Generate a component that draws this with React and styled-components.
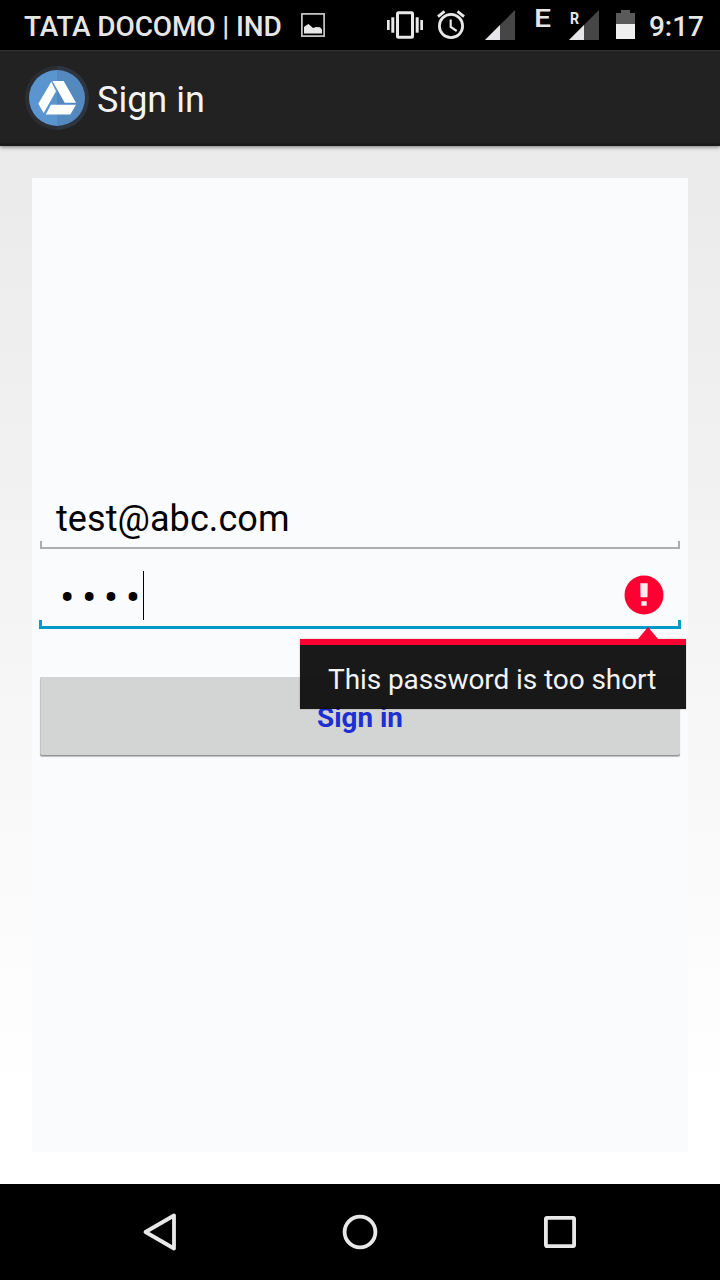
import React from "react";
import styled, { createGlobalStyle } from "styled-components";

const GlobalStyle = createGlobalStyle`
  * { box-sizing: border-box; }
  body { margin: 0; font-family: Roboto, sans-serif; background: #fff; }
  svg { display: block; flex: none; }
`;

const Screen = styled.div`
  width: 720px;
  height: 1280px;
  display: flex;
  flex-direction: column;
  overflow: hidden;
`;

const StatusBar = styled.header`
  height: 50px;
  flex: none;
  display: flex;
  align-items: center;
  justify-content: space-between;
  padding: 0 16px 0 24px;
  background: #000;
  color: #e6e6e6;
`;

const StatusGroup = styled.div`
  height: 50px;
  display: flex;
  align-items: center;
  gap: ${(p) => p.$gap || 0}px;
`;

const StatusText = styled.span`
  font-size: 28px;
  line-height: 33px;
  font-weight: 500;
  white-space: nowrap;
  padding-top: 3px;
  letter-spacing: ${(p) => p.$tracking || 0}px;
`;

const ActionBar = styled.div`
  height: 96px;
  flex: none;
  display: flex;
  align-items: center;
  gap: 8px;
  padding-left: 25px;
  background: linear-gradient(#222 91px, #1b1a1a 93px);
  border-top: 1px solid #333;
  box-shadow: 0 1px 4px rgba(0, 0, 0, 0.5);
  z-index: 1;
`;

const Title = styled.h1`
  margin: 0;
  font-size: 36px;
  line-height: 42px;
  font-weight: 400;
  color: #f3f3f3;
  padding-top: 3px;
`;

const Content = styled.main`
  flex: 1;
  padding: 32px;
  background: linear-gradient(#eaeaea, #fff 92%);
`;

const Card = styled.div`
  height: 100%;
  padding: 314px 8px 0;
  display: flex;
  flex-direction: column;
  background: #fafbfd;
`;

const Field = styled.div`
  height: 57px;
  flex: none;
  display: flex;
  flex-direction: column;
  justify-content: flex-end;
  position: relative;
`;

const PasswordField = styled(Field)`
  height: 80px;
  margin: 0 -1px;
`;

const FieldRow = styled.div`
  height: 49px;
  display: flex;
  align-items: center;
  padding: 0 17px;
`;

const EmailText = styled.span`
  display: block;
  padding: 0 0 1px 16px;
  font-size: 36px;
  line-height: 42px;
  letter-spacing: 0.08px;
  color: #000;
`;

const Bullets = styled.span`
  width: 87px;
  padding: 4px 0 0 4px;
  font-size: 43px;
  line-height: 45px;
  letter-spacing: 7.4px;
  color: #000;
  white-space: nowrap;
`;

const Caret = styled.span`
  width: 1px;
  height: 49px;
  background: #000;
`;

const ErrorSlot = styled.span`
  margin-left: auto;
  padding-bottom: 2px;
`;

const Underline = styled.div`
  height: ${(p) => (p.$active ? 9 : 8)}px;
  flex: none;
  border: ${(p) => (p.$active ? "3px solid #0099cc" : "2px solid #adaeb0")};
  border-top: 0;
`;

const ErrorPopup = styled.div`
  position: absolute;
  top: 90px;
  right: -5px;
  width: 386px;
  height: 70px;
  border-top: 6px solid #ff0033;
  background: rgba(17, 17, 17, 0.965);
  box-shadow: 0 0 2px rgba(60, 0, 10, 0.25);
  color: #f3f3f3;
  font-size: 28px;
  line-height: 33px;
  letter-spacing: -0.08px;
  padding: 18px 0 0 28px;
  white-space: nowrap;
  z-index: 2;
`;

const PopupArrow = styled.svg`
  position: absolute;
  top: -18px;
  right: 28px;
`;

const SubmitButton = styled.button`
  height: 79px;
  margin: 48px 0 0;
  padding: 1px 0 0;
  flex: none;
  border: 0;
  border-radius: 2px;
  background: #d3d5d4;
  box-shadow: inset 0 -1px 0 #929494, inset 1px 0 0 #c3c5c4, 0 1px 1px rgba(0, 0, 0, 0.25);
  font: 700 27.8px/33px Roboto, sans-serif;
  color: #1d2fd2;
`;

const NavBar = styled.nav`
  height: 96px;
  flex: none;
  display: grid;
  grid-template-columns: repeat(3, 200px);
  justify-content: center;
  align-items: center;
  justify-items: center;
  background: #000;
`;

const LIGHT = "#e8e8e8";

const PictureIcon = () => (
  <svg width="24" height="24" viewBox="0 0 24 24">
    <rect x="0.9" y="0.9" width="22.2" height="22.2" fill="none" stroke="#c9cbc9" strokeWidth="1.7" />
    <path d="M3 20.500V14L5 12.500 7.500 11l4.500 4 3-1 4 .2 2 2.300v4z" fill={LIGHT} />
  </svg>
);

const VibrateIcon = () => (
  <svg width="36" height="50" viewBox="0 0 36 50" fill={LIGHT}>
    <rect x="0" y="20" width="2.7" height="10" />
    <rect x="4.3" y="17.3" width="3" height="15.4" />
    <rect x="10.5" y="12.8" width="15" height="24.4" rx="1" fill="none" stroke={LIGHT} strokeWidth="3" />
    <rect x="28.7" y="17.3" width="3" height="15.4" />
    <rect x="33.3" y="20" width="2.7" height="10" />
  </svg>
);

const AlarmIcon = () => (
  <svg width="28" height="50" viewBox="0 0 28 50" fill="none" stroke={LIGHT}>
    <circle cx="14" cy="26" r="11.6" strokeWidth="2.8" />
    <path d="M1 16.7 7.5 11.3M20.5 11.3l6.5 5.4" strokeWidth="2.8" />
    <path d="M13.7 19.5v7.5l6 4" strokeWidth="2.2" />
  </svg>
);

const SignalIcon = () => (
  <svg width="30" height="50" viewBox="0 0 30 50">
    <path d="M30 10v30H0z" fill="#464646" />
    <path d="M15 25v15H0z" fill="#e6e6e8" />
  </svg>
);

const BatteryIcon = () => (
  <svg width="19" height="50" viewBox="0 0 19 50">
    <path d="M5 10h9v3h5v11H0V13h5z" fill="#5a5a5a" />
    <path d="M0 24h19v15H0z" fill="#efefef" />
  </svg>
);

const NetworkType = styled.span`
  width: 14px;
  margin: 0 19px 0 21px;
  padding-bottom: 14px;
  font: 500 26.5px/30px Roboto, sans-serif;
  display: flex;
  justify-content: center;
`;

const NetworkGlyph = styled.span`
  transform: scaleX(1.14);
`;

const RoamingSignal = styled.div`
  position: relative;
`;

const RoamingLabel = styled.span`
  position: absolute;
  left: 1px;
  top: 9px;
  font: 700 16.5px/20px Roboto, sans-serif;
  transform: scaleX(0.86);
  transform-origin: left;
`;

const Spacer = styled.span`
  width: ${(p) => p.$w}px;
`;

const DriveIcon = () => (
  <svg width="64" height="66" viewBox="25 66 64 66">
    <path d="M57 66a32 32 0 0 0 0 64z" fill="#2a2e33" />
    <path d="M57 66a32 32 0 0 1 0 64z" fill="#2d3640" />
    <path d="M57 70a28 28 0 0 0 0 56z" fill="#5a95d0" />
    <path d="M57 70a28 28 0 0 1 0 56z" fill="#5489c0" />
    <path d="M51.3 81.7 56 91.3 43.7 113 38.3 103.7zM52.4 81h11.3L76 102.700H64.700zM51 104.700h25L70.300 114.500H45.700z" fill="#fff" />
  </svg>
);

const ErrorIcon = () => (
  <svg width="40" height="40" viewBox="0 0 40 40">
    <circle cx="20" cy="20" r="19.5" fill="#ff0033" />
    <path d="M16.3 8.2h7.4l-.2 14h-7zM17.3 26.200h5.400v4.600h-5.400z" fill="#ffeaf0" />
  </svg>
);

const BackIcon = () => (
  <svg width="40" height="40" viewBox="140 1212 40 40">
    <path d="M174 1215.5v33L145.5 1232z" fill="none" stroke={LIGHT} strokeWidth="3.8" strokeLinejoin="round" />
  </svg>
);

const HomeIcon = () => (
  <svg width="40" height="40" viewBox="0 0 40 40">
    <circle cx="20" cy="20" r="15.4" fill="none" stroke={LIGHT} strokeWidth="3.8" />
  </svg>
);

const RecentIcon = () => (
  <svg width="40" height="40" viewBox="0 0 40 40">
    <rect x="5.9" y="5.9" width="28.2" height="28.2" rx="1" fill="none" stroke={LIGHT} strokeWidth="3.8" />
  </svg>
);

export default function App() {
  return (
    <Screen>
      <GlobalStyle />
      <StatusBar>
        <StatusGroup $gap={19}>
          <StatusText $tracking={-0.12}>TATA DOCOMO | IND</StatusText>
          <PictureIcon />
        </StatusGroup>
        <StatusGroup>
          <VibrateIcon />
          <Spacer $w={14} />
          <AlarmIcon />
          <Spacer $w={20} />
          <SignalIcon />
          <NetworkType>
            <NetworkGlyph>E</NetworkGlyph>
          </NetworkType>
          <RoamingSignal>
            <SignalIcon />
            <RoamingLabel>R</RoamingLabel>
          </RoamingSignal>
          <Spacer $w={17} />
          <BatteryIcon />
          <Spacer $w={14} />
          <StatusText>9:17</StatusText>
        </StatusGroup>
      </StatusBar>
      <ActionBar>
        <DriveIcon />
        <Title>Sign in</Title>
      </ActionBar>
      <Content>
        <Card>
          <Field>
            <EmailText>test@abc.com</EmailText>
            <Underline />
          </Field>
          <PasswordField>
            <FieldRow>
              <Bullets>••••</Bullets>
              <Caret />
              <ErrorSlot>
                <ErrorIcon />
              </ErrorSlot>
            </FieldRow>
            <Underline $active />
            <ErrorPopup>
              <PopupArrow width="20" height="12" viewBox="0 0 20 12">
                <path d="M10 0l10 12H0z" fill="#ff0033" />
              </PopupArrow>
              This password is too short
            </ErrorPopup>
          </PasswordField>
          <SubmitButton type="button">Sign in</SubmitButton>
        </Card>
      </Content>
      <NavBar>
        <BackIcon />
        <HomeIcon />
        <RecentIcon />
      </NavBar>
    </Screen>
  );
}
